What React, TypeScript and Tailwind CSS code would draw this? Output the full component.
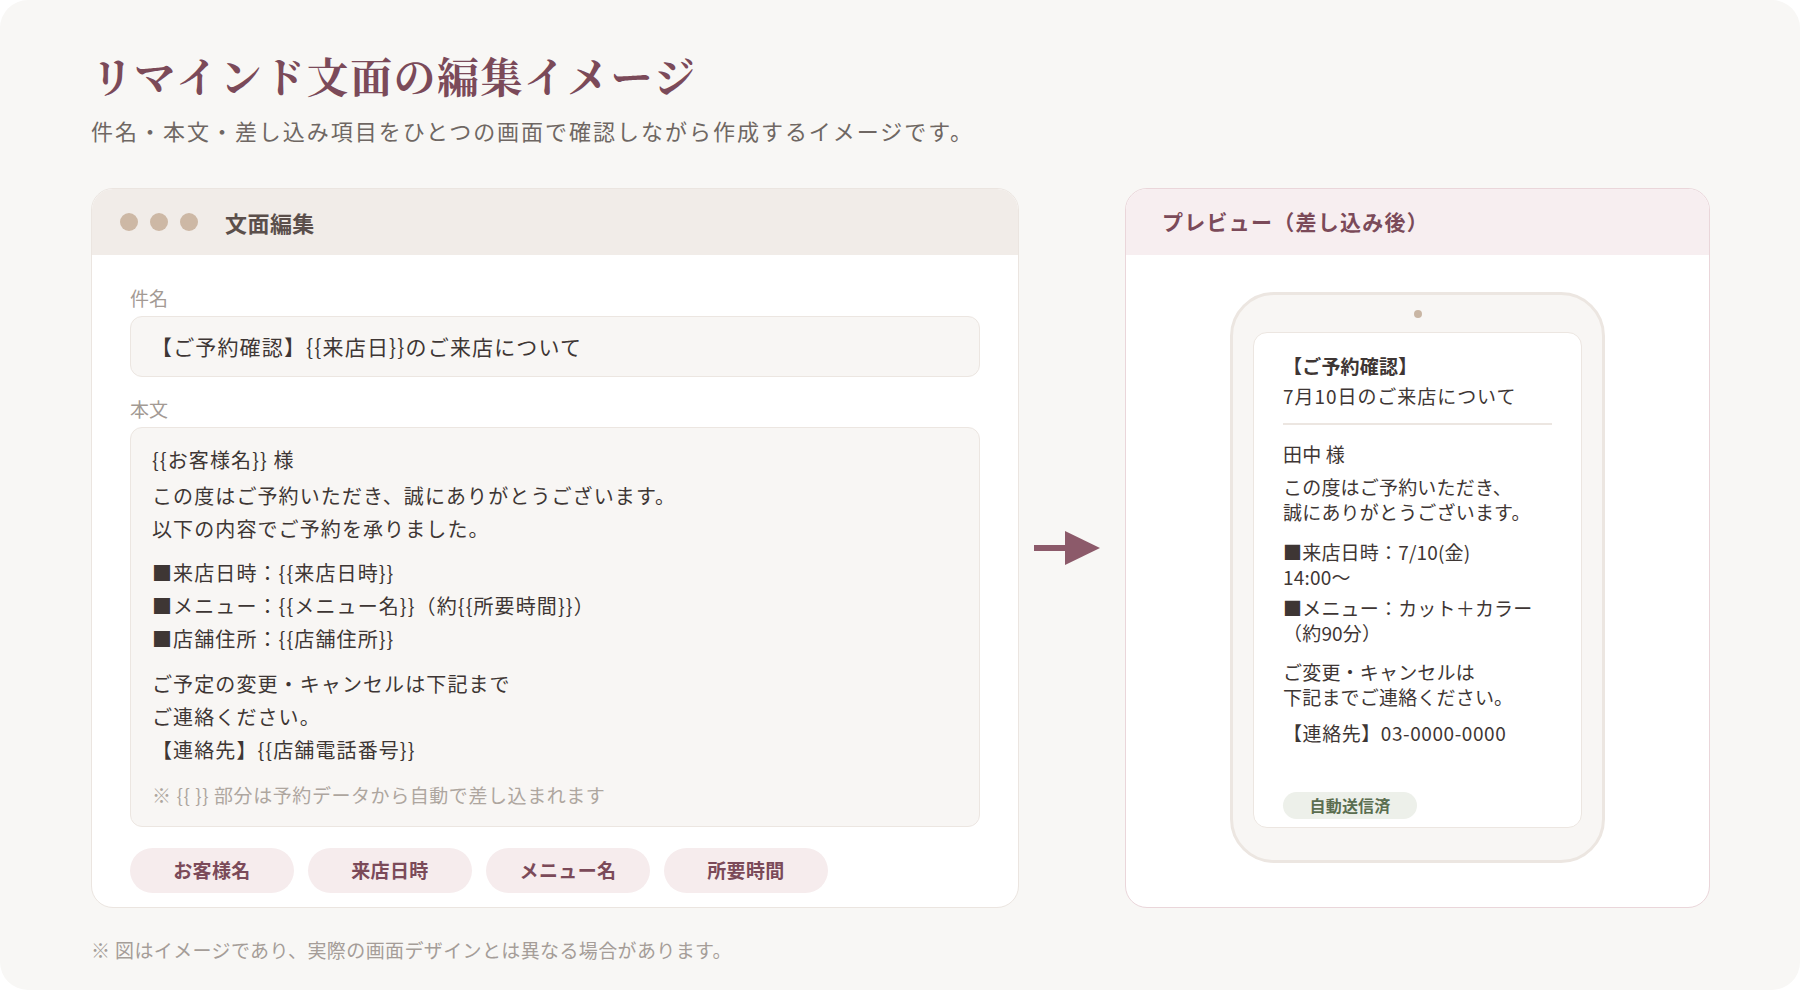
import React from "react";

const sans = { fontFamily: '"Noto Sans CJK JP", "Noto Sans", sans-serif' };

function Chip({ label }: { label: string }) {
  return (
    <div className="flex h-[45px] w-[164px] items-center justify-center rounded-full bg-[#f6eced] text-[19px] font-bold tracking-[0.02em] text-[#7b4a59]">
      {label}
    </div>
  );
}

export default function App() {
  return (
    <div className="h-[990px] w-[1800px] bg-white" style={sans}>
      <div className="flex h-full w-full flex-col rounded-[28px] bg-[#f8f7f5] pl-[91px] pt-[47px]">
        <h1
          className="text-[42px] font-bold leading-[56px] tracking-[0.035em] text-[#7b4a59]"
          style={{ fontFamily: '"Noto Serif CJK JP", "Noto Serif JP", "IPAMincho", "Noto Sans CJK JP", serif' }}
        >
          リマインド文面の編集イメージ
        </h1>
        <p className="mt-[12px] text-[22px] leading-[30px] tracking-[0.09em] text-[#6f6763]">
          件名・本文・差し込み項目をひとつの画面で確認しながら作成するイメージです。
        </p>

        <div className="mt-[43px] flex h-[720px]">
          {/* Left panel */}
          <div className="flex w-[928px] flex-col overflow-hidden rounded-[22px] border-[1.5px] border-[#ebe5e0] bg-white">
            <div className="flex h-[66px] items-center bg-[#f1ece8] pl-[28px]">
              <div className="flex gap-[12px]">
                <span className="h-[18px] w-[18px] rounded-full bg-[#cdb8a5]" />
                <span className="h-[18px] w-[18px] rounded-full bg-[#cdb8a5]" />
                <span className="h-[18px] w-[18px] rounded-full bg-[#cdb8a5]" />
              </div>
              <span className="ml-[27px] text-[22px] font-bold tracking-[0.02em] text-[#5b4f4b]">文面編集</span>
            </div>
            <div className="flex flex-col px-[38px] pt-[31px]">
              <div className="text-[19px] leading-[24px] text-[#a39a94]">件名</div>
              <div className="mt-[6px] flex h-[61px] items-center rounded-[12px] border-[1.5px] border-[#ece6e1] bg-[#f8f6f4] pl-[20px] text-[21px] tracking-[0.055em] text-[#3e3634]">
                【ご予約確認】{"{{"}来店日{"}}"}のご来店について
              </div>
              <div className="mt-[20px] text-[19px] leading-[24px] text-[#a39a94]">本文</div>
              <div className="mt-[6px] flex h-[400px] flex-col rounded-[12px] border-[1.5px] border-[#ece6e1] bg-[#f8f6f4] px-[21px] pt-[15px] text-[20px] leading-[33px] tracking-[0.055em] text-[#3e3634]">
                <p>{"{{"}お客様名{"}}"} 様</p>
                <p className="mt-[3px]">
                  この度はご予約いただき、誠にありがとうございます。
                  <br />
                  以下の内容でご予約を承りました。
                </p>
                <p className="mt-[11px]">
                  ■来店日時：{"{{"}来店日時{"}}"}
                  <br />
                  ■メニュー：{"{{"}メニュー名{"}}"}（約{"{{"}所要時間{"}}"}）
                  <br />
                  ■店舗住所：{"{{"}店舗住所{"}}"}
                </p>
                <p className="mt-[12px]">
                  ご予定の変更・キャンセルは下記まで
                  <br />
                  ご連絡ください。
                  <br />
                  【連絡先】{"{{"}店舗電話番号{"}}"}
                </p>
                <p className="mt-[12px] text-[19px] tracking-[0.03em] text-[#aea69f]">
                  ※ {"{{ }}"} 部分は予約データから自動で差し込まれます
                </p>
              </div>
              <div className="mt-[21px] flex gap-[14px]">
                <Chip label="お客様名" />
                <Chip label="来店日時" />
                <Chip label="メニュー名" />
                <Chip label="所要時間" />
              </div>
            </div>
          </div>

          {/* Arrow */}
          <div className="flex w-[106px] items-center pl-[14px]">
            <svg width="68" height="36" viewBox="0 0 68 36">
              <rect x="1" y="15" width="33" height="6" fill="#8c5a6a" />
              <polygon points="32,1 67,18 32,35" fill="#8c5a6a" />
            </svg>
          </div>

          {/* Right panel */}
          <div className="flex w-[585px] flex-col overflow-hidden rounded-[22px] border-[1.5px] border-[#ead6da] bg-white">
            <div className="flex h-[66px] items-center bg-[#f7eef0] pl-[36px]">
              <span className="text-[21px] font-bold tracking-[0.06em] text-[#7b4a59]">プレビュー（差し込み後）</span>
            </div>
            <div className="flex justify-center pt-[37px]">
              <div className="flex h-[571px] w-[375px] flex-col items-center rounded-[44px] border-[3px] border-[#ece6e1] bg-[#f8f6f4] px-[20px] pt-[15px] pb-[32px]">
                <span className="h-[8px] w-[8px] rounded-full bg-[#c9b6a4]" />
                <div className="mt-[14px] flex w-full flex-1 flex-col rounded-[14px] border-[1.5px] border-[#ece6e1] bg-white px-[29px] pt-[18px] pb-[8px] text-[19px] leading-[25px] tracking-[0.01em] text-[#3e3634]">
                  <p className="font-bold leading-[30px]">【ご予約確認】</p>
                  <p className="leading-[30px] tracking-[0.05em]">7月10日のご来店について</p>
                  <div className="mt-[12px] h-[2px] w-full bg-[#ece6e1]" />
                  <p className="mt-[16px]">田中 様</p>
                  <p className="mt-[8px]">
                    この度はご予約いただき、
                    <br />
                    誠にありがとうございます。
                  </p>
                  <p className="mt-[15px]">
                    ■来店日時：7/10(金)
                    <br />
                    14:00〜
                  </p>
                  <p className="mt-[6px]">
                    ■メニュー：カット＋カラー
                    <br />
                    （約90分）
                  </p>
                  <p className="mt-[14px]">
                    ご変更・キャンセルは
                    <br />
                    下記までご連絡ください。
                  </p>
                  <p className="mt-[11px] tracking-[0.03em]">【連絡先】03-0000-0000</p>
                  <div className="mt-auto flex h-[27px] w-[134px] items-center justify-center rounded-full bg-[#edf0ea] text-[16px] font-bold text-[#5b6e50]">
                    自動送信済
                  </div>
                </div>
              </div>
            </div>
          </div>
        </div>

        <p className="mt-[30px] text-[19px] leading-[24px] tracking-[0.02em] text-[#a59d98]">
          ※ 図はイメージであり、実際の画面デザインとは異なる場合があります。
        </p>
      </div>
    </div>
  );
}
